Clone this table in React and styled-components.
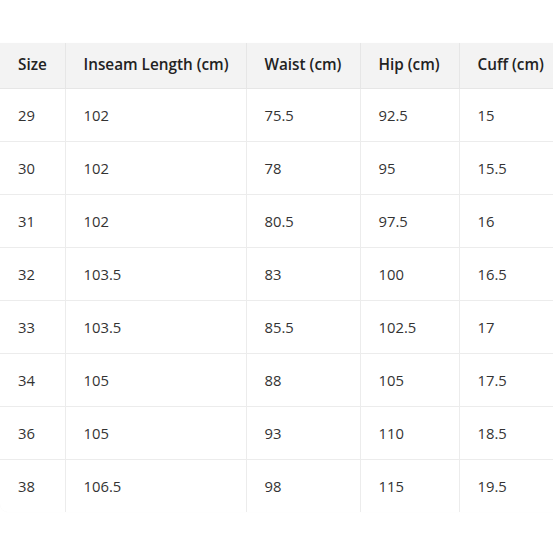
import React from 'react';
import styled, { createGlobalStyle } from 'styled-components';

const GlobalStyle = createGlobalStyle`
  body {
    margin: 0;
    background: #fff;
    font-family: "Open Sans", "Noto Sans", "Liberation Sans", sans-serif;
  }
`;

const Page = styled.div`
  padding-top: 43px;
  width: 553px;
  height: 553px;
  overflow: hidden;
  box-sizing: border-box;
`;

const Card = styled.div`
  width: 600px;
  border-radius: 0 0 8px 8px;
  overflow: hidden;
  box-shadow: 0 0 1px rgba(0, 0, 0, 0.05);
`;

const Table = styled.table`
  border-collapse: collapse;
  table-layout: fixed;
  width: 600px;
  font-size: 14.8px;
  color: #333;
`;

const Head = styled.th`
  background: #f3f3f3;
  height: 45px;
  padding: 0 0 3px 18px;
  text-align: left;
  font-size: 15.3px;
  font-weight: 600;
  color: #222;
  border-left: 1px solid #e6e6e6;
  border-bottom: 1px solid #e6e6e6;
  box-sizing: border-box;
  white-space: nowrap;
  &:first-child { border-left: none; }
`;

const Cell = styled.td`
  height: 53px;
  padding: 0 0 0 18px;
  text-align: left;
  border-left: 1px solid #ececec;
  border-bottom: ${p => (p.$last ? 'none' : '1px solid #ececec')};
  box-sizing: border-box;
  &:first-child { border-left: none; }
`;

const widths = [65, 181, 114, 99, 141];
const headers = ['Size', 'Inseam Length (cm)', 'Waist (cm)', 'Hip (cm)', 'Cuff (cm)'];
const rows = [
  ['29', '102', '75.5', '92.5', '15'],
  ['30', '102', '78', '95', '15.5'],
  ['31', '102', '80.5', '97.5', '16'],
  ['32', '103.5', '83', '100', '16.5'],
  ['33', '103.5', '85.5', '102.5', '17'],
  ['34', '105', '88', '105', '17.5'],
  ['36', '105', '93', '110', '18.5'],
  ['38', '106.5', '98', '115', '19.5'],
];

export default function App() {
  return (
    <Page>
      <GlobalStyle />
      <Card>
        <Table>
          <colgroup>
            {widths.map((w, i) => <col key={i} style={{ width: w }} />)}
          </colgroup>
          <thead>
            <tr>
              {headers.map(h => <Head key={h}>{h}</Head>)}
            </tr>
          </thead>
          <tbody>
            {rows.map((r, i) => (
              <tr key={r[0]}>
                {r.map((v, j) => (
                  <Cell key={j} $last={i === rows.length - 1}>{v}</Cell>
                ))}
              </tr>
            ))}
          </tbody>
        </Table>
      </Card>
    </Page>
  );
}
